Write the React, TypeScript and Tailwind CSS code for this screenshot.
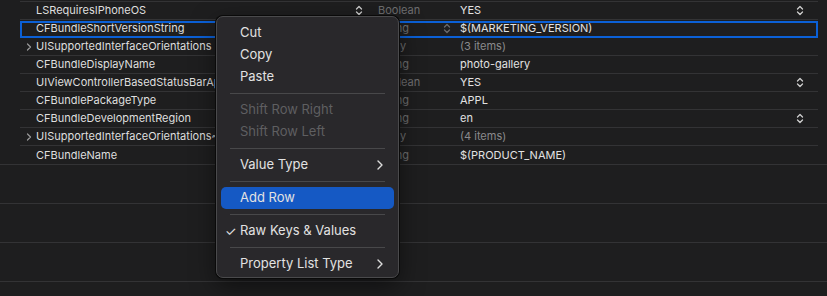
import React from 'react';

type Row = {
  key: string;
  type: string;
  value: string;
  dim?: boolean;
  expandable?: boolean;
  stepper?: boolean;
  keyStepper?: boolean;
  selected?: boolean;
};

const rows: Row[] = [
  { key: 'LSRequiresIPhoneOS', type: 'Boolean', value: 'YES', stepper: true, keyStepper: true },
  { key: 'CFBundleShortVersionString', type: 'String', value: '$(MARKETING_VERSION)', selected: true },
  { key: 'UISupportedInterfaceOrientations', type: 'Array', value: '(3 items)', dim: true, expandable: true },
  { key: 'CFBundleDisplayName', type: 'String', value: 'photo-gallery' },
  { key: 'UIViewControllerBasedStatusBarAppearance', type: 'Boolean', value: 'YES', stepper: true },
  { key: 'CFBundlePackageType', type: 'String', value: 'APPL' },
  { key: 'CFBundleDevelopmentRegion', type: 'String', value: 'en', stepper: true },
  { key: 'UISupportedInterfaceOrientations~ipad', type: 'Array', value: '(4 items)', dim: true, expandable: true },
  { key: 'CFBundleName', type: 'String', value: '$(PRODUCT_NAME)' },
];

function Stepper({ color }: { color: string }) {
  return (
    <svg width="8" height="11" viewBox="0 0 8 11" fill="none" stroke={color} strokeWidth="1.3" strokeLinecap="round" strokeLinejoin="round">
      <path d="M1.5 4 L4 1.5 L6.5 4" />
      <path d="M1.5 7 L4 9.5 L6.5 7" />
    </svg>
  );
}

function Disclosure() {
  return (
    <svg width="6" height="8" viewBox="0 0 6 8" fill="none" stroke="#9a9a9a" strokeWidth="1.2" strokeLinecap="round" strokeLinejoin="round">
      <path d="M1.5 1 L4.5 4 L1.5 7" />
    </svg>
  );
}

function MenuChevron() {
  return (
    <svg width="6" height="10" viewBox="0 0 6 10" fill="none" stroke="#dcdcdc" strokeWidth="1.4" strokeLinecap="round" strokeLinejoin="round">
      <path d="M1 1 L5 5 L1 9" />
    </svg>
  );
}

function MenuItem({ label, disabled, active, checked, submenu }: { label: string; disabled?: boolean; active?: boolean; checked?: boolean; submenu?: boolean }) {
  return (
    <div
      className={`relative mx-[4px] h-[22px] flex items-center pl-[19px] pr-[11px] rounded-[5px] ${active ? 'bg-[#1559c4]' : ''} ${disabled ? 'text-[#5f5f61]' : 'text-[#e2e2e2]'}`}
    >
      {checked && <span className="absolute left-[4px] text-[13px] leading-none">✓</span>}
      <span className="flex-1">{label}</span>
      {submenu && <MenuChevron />}
    </div>
  );
}

function MenuSeparator() {
  return (
    <div className="h-[11px] flex items-center px-[13px]">
      <div className="h-px w-full bg-[#48484a]" />
    </div>
  );
}

export default function App() {
  return (
    <div className="relative w-[827px] h-[296px] overflow-hidden bg-[#1e1e1f] font-['Inter',sans-serif]">
      <div className="pt-[1px]">
        <div className="ml-[20px] mr-[9px] border-t border-[#333335]">
          {rows.map((r, i) => (
            <div
              key={r.key}
              className={`relative h-[18px] flex items-center text-[11px] ${i < rows.length - 1 ? 'border-b border-[#333335]' : 'h-[17px]'}`}
            >
              <div className="w-[352px] flex items-center pr-[9px] overflow-hidden">
                <div className="w-[16px] pl-[6px] flex items-center">{r.expandable && <Disclosure />}</div>
                <span className="flex-1 whitespace-nowrap overflow-hidden text-[#dedede]">{r.key}</span>
                {r.keyStepper && <Stepper color="#cfcfcf" />}
              </div>
              <div className="w-[88px] flex items-center pl-[6px] pr-[9px]">
                <span className="flex-1 text-[#6e6e70]">{r.type}</span>
                {r.selected && <Stepper color="#6a6a6c" />}
              </div>
              <div className="flex-1 flex items-center pr-[14px]">
                <span className={`flex-1 ${r.dim ? 'text-[#8a8a8c]' : 'text-[#e2e2e2]'}`}>{r.value}</span>
                {r.stepper && <Stepper color="#cfcfcf" />}
              </div>
              {r.selected && <div className="absolute left-0 right-0 top-[1px] bottom-[-1px] border-2 border-[#0b60d6]" />}
            </div>
          ))}
        </div>
        <div className="border-t border-[#333335]" />
        <div className="h-[39px] border-b border-[#333335]" />
        <div className="h-[39px] border-b border-[#333335]" />
        <div className="h-[39px] border-b border-[#333335]" />
      </div>

      <div className="absolute left-[216px] top-[16px] w-[183px] rounded-[7px] border border-[#4a4a4c] bg-[#29282b] pt-[5px] pb-[2px] text-[13px] shadow-[0_0_0_1px_#0a0a0a,0_8px_24px_rgba(0,0,0,0.5)]">
        <MenuItem label="Cut" />
        <MenuItem label="Copy" />
        <MenuItem label="Paste" />
        <MenuSeparator />
        <MenuItem label="Shift Row Right" disabled />
        <MenuItem label="Shift Row Left" disabled />
        <MenuSeparator />
        <MenuItem label="Value Type" submenu />
        <MenuSeparator />
        <MenuItem label="Add Row" active />
        <MenuSeparator />
        <MenuItem label="Raw Keys & Values" checked />
        <MenuSeparator />
        <MenuItem label="Property List Type" submenu />
      </div>
    </div>
  );
}
